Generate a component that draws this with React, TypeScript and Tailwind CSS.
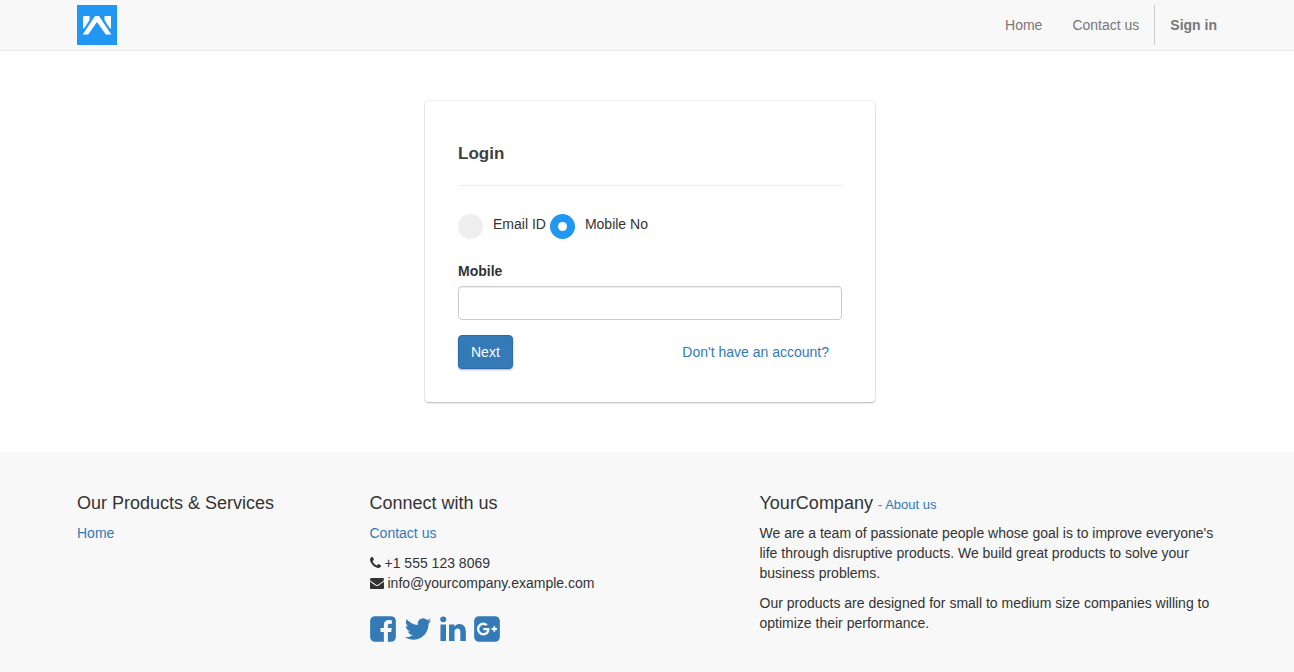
import type { ReactNode } from "react";

function Glyph({ viewBox, d, className }: { viewBox: string; d: string; className: string }) {
  return (
    <svg viewBox={viewBox} className={className} fill="currentColor" aria-hidden="true">
      <path d={d} />
    </svg>
  );
}

const PHONE =
  "M1600 1240q0 27-10 70.5t-21 68.5q-21 50-122 106-94 51-186 51-27 0-53-3.5t-57-12.5-47-14.5-55.5-20.5-49.5-18q-98-35-175-83-127-79-264-216t-216-264q-48-77-83-175-3-9-18-49.5t-20.5-55.5-14.5-47-12.5-57-3.5-53q0-92 51-186 56-101 106-122 25-11 68.5-21t70.5-10q14 0 21 3 18 6 53 76 11 19 30 54t35 63.5 31 53.5q3 4 17.5 25t21.5 35.5 7 28.5q0 20-28.5 50t-62 55-62 53-28.5 46q0 9 5 22.5t8.5 20.5 14 24 11.5 19q76 137 174 235t235 174q2 1 19 11.5t24 14 20.5 8.5 22.5 5q18 0 46-28.5t53-62 55-62 50-28.5q14 0 28.5 7t35.5 21.5 25 17.5q25 15 53.5 31t63.5 35 54 30q70 35 76 53 3 7 3 21z";
const ENVELOPE =
  "M1792 710v794q0 66-47 113t-113 47h-1472q-66 0-113-47t-47-113v-794q44 49 101 87 362 246 497 345 57 42 92.5 65.5t94.5 48 110 24.5h2q51 0 110-24.5t94.5-48 92.5-65.5q170-123 498-345 57-39 100-87zm0-294q0 79-49 151t-122 123q-376 261-468 325-10 7-42.5 31t-54 38.5-52 32.5-57.5 27-50 9h-2q-23 0-50-9t-57.5-27-52-32.5-54-38.5-42.5-31q-91-64-262-182.5t-205-142.5q-62-42-117-115.5t-55-136.5q0-78 41.5-130t118.5-52h1472q65 0 112.5 47t47.5 113z";
const FACEBOOK =
  "M1376 128q119 0 203.5 84.5t84.5 203.5v960q0 119-84.5 203.5t-203.5 84.5h-188v-595h199l30-232h-229v-148q0-56 23.5-84t91.5-28l122-1v-207q-63-9-178-9-136 0-217.5 80t-81.5 226v171h-200v232h200v595h-532q-119 0-203.5-84.5t-84.5-203.5v-960q0-119 84.5-203.5t203.5-84.5h960z";
const TWITTER =
  "M1684 408q-67 98-162 167 1 14 1 42 0 130-38 259.5t-115.5 248.5-184.5 210.5-258 146-323 54.5q-271 0-496-145 35 4 78 4 225 0 401-138-105-2-188-64.5t-114-159.5q33 5 61 5 43 0 85-11-112-23-185.5-111.5t-73.5-205.5v-4q68 38 146 41-66-44-105-115t-39-154q0-88 44-163 121 149 294.5 238.5t371.5 99.5q-8-38-8-74 0-134 94.5-228.5t228.5-94.5q140 0 236 102 109-21 205-78-37 115-142 178 93-10 186-50z";
const LINKEDIN =
  "M477 625v991h-330v-991h330zm21-306q1 73-50.5 122t-135.5 49h-2q-82 0-132-49t-50-122q0-74 51.5-122.5t134.5-48.5 133 48.5 51 122.5zm1166 729v568h-329v-530q0-105-40.5-164.5t-126.5-59.5q-63 0-105.5 34.5t-63.5 85.5q-11 30-11 81v553h-329q2-399 2-647t-1-296l-1-48h329v144h-2q20-32 41-56t56.5-52 87-43.5 114.5-15.5q171 0 275 113.5t104 332.5z";
const GOOGLE_PLUS =
  "M1045 905q0-26-6-64h-362v132h217q-3 24-16.5 50t-37.5 53-66.5 44.5-96.5 17.5q-99 0-169-71t-70-171 70-171 169-71q92 0 153 59l104-101q-108-100-257-100-160 0-272 112.5t-112 271.5 112 271.5 272 112.5q165 0 266.5-105t101.5-270zm345 46h109v-110h-109v-110h-110v110h-110v110h110v110h110v-110zm274-535v960q0 119-84.5 203.5t-203.5 84.5h-960q-119 0-203.5-84.5t-84.5-203.5v-960q0-119 84.5-203.5t203.5-84.5h960q119 0 203.5 84.5t84.5 203.5z";

function Container({ children, className }: { children: ReactNode; className: string }) {
  return <div className={`mx-auto w-full max-w-[1170px] px-[15px] ${className}`}>{children}</div>;
}

function Logo() {
  return (
    <svg viewBox="0 0 40 40" className="size-10" aria-hidden="true">
      <rect width="40" height="40" fill="#2196f3" />
      <g fill="#fff">
        <path d="M6 11h6.500v4L7.500 23 6 23.500z" />
        <path d="M34 11h-6.500v4L32.500 23 34 23.500z" />
        <path d="M18 11h4L34.300 29.500h-5.500L20 17 11.200 29.500H5.700z" />
      </g>
    </svg>
  );
}

function RadioOption({ label, value, checked }: { label: string; value: string; checked?: boolean }) {
  return (
    <label className="flex cursor-pointer items-start gap-[10px]">
      <input
        type="radio"
        name="login-type"
        value={value}
        defaultChecked={checked}
        className="grid size-[25px] shrink-0 appearance-none place-items-center rounded-full bg-[#eee] before:hidden before:size-[9px] before:rounded-full before:bg-white checked:bg-[#2196f3] checked:before:block"
      />
      {label}
    </label>
  );
}

function LoginCard() {
  return (
    <form
      className="w-full max-w-[450px] rounded bg-white p-[33px] shadow-[0_1px_2px_rgba(0,0,0,0.25),0_0_1px_1px_rgba(0,0,0,0.05)]"
      onSubmit={(e) => e.preventDefault()}
    >
      <h3 className="pt-2 pb-[19px] text-[17px] leading-6 font-bold text-[#404040]">Login</h3>
      <hr className="border-[#eee]" />
      <div className="flex gap-1 pt-7 pb-[22px]">
        <RadioOption label="Email ID" value="email" />
        <RadioOption label="Mobile No" value="mobile" checked />
      </div>
      <label htmlFor="mobile" className="mb-[5px] block font-bold">
        Mobile
      </label>
      <input
        id="mobile"
        type="text"
        className="block h-[34px] w-full rounded border border-[#ccc] bg-white px-3 shadow-[inset_0_1px_1px_rgba(0,0,0,0.075)]"
      />
      <div className="mt-[15px] flex items-center justify-between">
        <button
          type="submit"
          className="rounded border border-[#2e6da4] bg-[#337ab7] px-3 py-[6px] text-white shadow-[0_1px_2px_rgba(0,0,0,0.3)]"
        >
          Next
        </button>
        <a href="#signup" className="px-[13px] text-[#337ab7]">
          Don't have an account?
        </a>
      </div>
    </form>
  );
}

export default function App() {
  return (
    <div className="flex min-h-screen flex-col bg-white font-['Liberation_Sans',Arial,sans-serif] text-[14px] leading-5 text-[#333]">
      <header className="border-b border-[#e7e7e7] bg-[#f8f8f8]">
        <Container className="flex items-center justify-between py-[5px]">
          <a href="#home" aria-label="Homepage">
            <Logo />
          </a>
          <nav className="flex items-center text-[#777]">
            <a href="#home" className="px-[15px]">
              Home
            </a>
            <a href="#contact" className="px-[15px]">
              Contact us
            </a>
            <a href="#signin" className="border-l border-[#ccc] py-[10px] pl-[15px] font-bold">
              Sign in
            </a>
          </nav>
        </Container>
      </header>

      <main className="flex justify-center pt-[50px] pr-4 pb-[50px] pl-[22px]">
        <LoginCard />
      </main>

      <footer className="grow bg-[#f8f8f8]">
        <Container className="grid grid-cols-12 gap-x-[30px] pt-[41px] pb-5">
          <section className="col-span-3">
            <h4 className="mb-[10px] text-[18px]/5">Our Products &amp; Services</h4>
            <a href="#home" className="text-[#337ab7]">
              Home
            </a>
          </section>
          <section className="col-span-4">
            <h4 className="mb-[10px] text-[18px]/5">Connect with us</h4>
            <a href="#contact" className="text-[#337ab7]">
              Contact us
            </a>
            <ul className="mt-[10px]">
              <li className="flex items-center gap-1">
                <Glyph viewBox="192 0 1408 1792" d={PHONE} className="h-[14px] w-[11px]" />
                +1 555 123 8069
              </li>
              <li className="flex items-center gap-1">
                <Glyph viewBox="0 0 1792 1792" d={ENVELOPE} className="size-[14px]" />
                info@yourcompany.example.com
              </li>
            </ul>
            <div className="mt-[21px] flex gap-2 text-[#337ab7]">
              <a href="#facebook" aria-label="Facebook">
                <Glyph viewBox="128 0 1536 1792" d={FACEBOOK} className="h-[30px] w-[26px]" />
              </a>
              <a href="#twitter" aria-label="Twitter">
                <Glyph viewBox="64 0 1664 1792" d={TWITTER} className="h-[30px] w-7" />
              </a>
              <a href="#linkedin" aria-label="LinkedIn">
                <Glyph viewBox="128 0 1536 1792" d={LINKEDIN} className="h-[30px] w-[26px]" />
              </a>
              <a href="#google-plus" aria-label="Google Plus">
                <Glyph viewBox="128 0 1536 1792" d={GOOGLE_PLUS} className="h-[30px] w-[26px]" />
              </a>
            </div>
          </section>
          <section className="col-span-5">
            <h4 className="mb-[10px] text-[18px]/5">
              YourCompany{" "}
              <small className="text-[13px] leading-none text-[#337ab7]">
                <span className="text-[#777]">-</span> <a href="#about">About us</a>
              </small>
            </h4>
            <p className="mb-[10px]">
              We are a team of passionate people whose goal is to improve everyone's life through disruptive products.
              We build great products to solve your business problems.
            </p>
            <p>Our products are designed for small to medium size companies willing to optimize their performance.</p>
          </section>
        </Container>
      </footer>
    </div>
  );
}
